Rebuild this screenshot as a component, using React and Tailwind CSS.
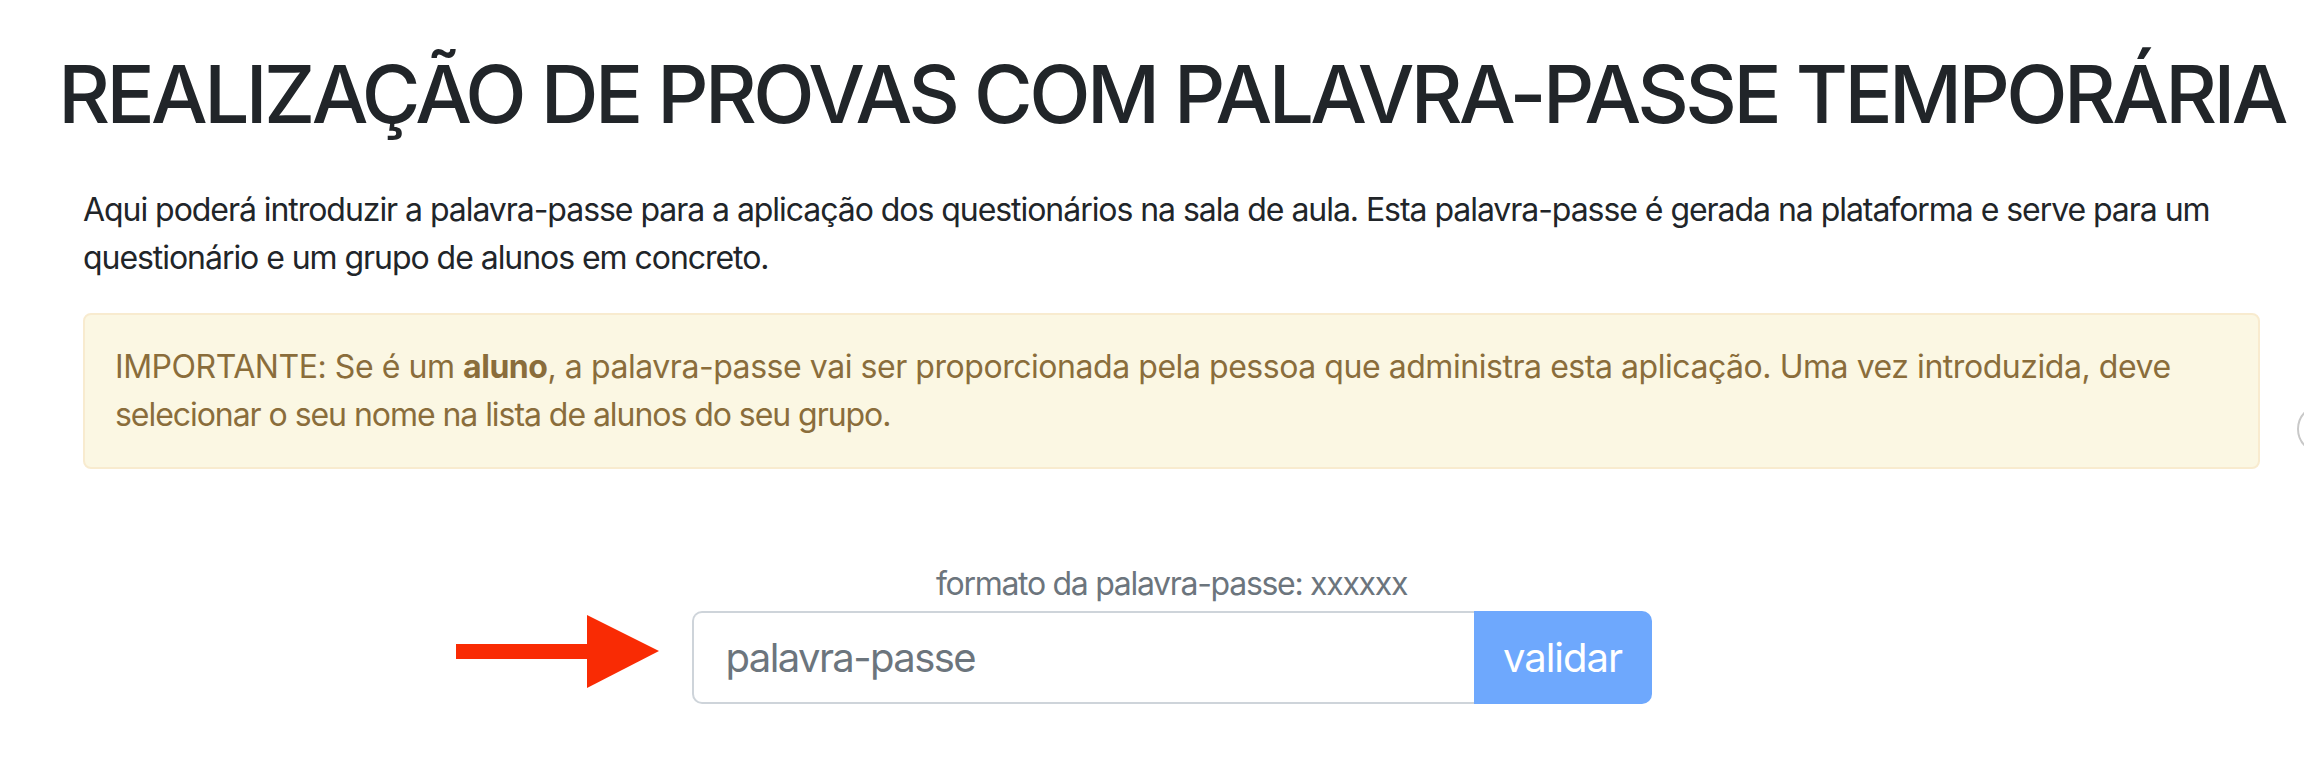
import { useState } from "react";

function Arrow() {
  return (
    <svg width="203" height="73" viewBox="0 0 203 73" className="absolute right-full top-[4px] mr-[33px]">
      <rect x="0" y="29" width="132" height="15" fill="#f92b04" />
      <polygon points="131,0 203,36 131,73" fill="#f92b04" />
    </svg>
  );
}

function App() {
  const [password, setPassword] = useState("");

  return (
    <div className="relative min-h-screen w-[2304px] overflow-hidden bg-white font-['Inter',sans-serif] text-[#212529]">
      <div className="ml-[83px] w-[2177px] pt-[46px]">
        <div className="flex justify-center">
          <h1 className="whitespace-nowrap text-[80px] font-medium leading-[96px] tracking-[-3.6px]">
            REALIZAÇÃO DE PROVAS COM PALAVRA-PASSE TEMPORÁRIA
          </h1>
        </div>

        <p className="mt-[44px] text-[32px] leading-[48px] tracking-[-1.05px]">
          Aqui poderá introduzir a palavra-passe para a aplicação dos questionários na sala de aula. Esta palavra-passe é gerada na plataforma e serve para um
          <br />
          questionário e um grupo de alunos em concreto.
        </p>

        <div className="mt-[31px] rounded-[8px] border-2 border-[#f8ebcf] bg-[#fbf7e3] px-[30px] py-[28px] text-[32px] leading-[48px] tracking-[-1.05px] text-[#8a6d3b]">
          <span className="block whitespace-nowrap tracking-[-0.45px]">
            IMPORTANTE: Se é um <b>aluno</b>, a palavra-passe vai ser proporcionada pela pessoa que administra esta aplicação. Uma vez introduzida, deve
          </span>
          <span className="block">selecionar o seu nome na lista de alunos do seu grupo.</span>
        </div>

        <form
          onSubmit={(e) => e.preventDefault()}
          className="mt-[91px] flex flex-col items-center"
        >
          <div className="text-[32px] leading-[48px] tracking-[-1.3px] text-[#6c757d]">
            formato da palavra-passe: xxxxxx
          </div>
          <div className="relative mt-[3px] flex h-[93px] w-[960px]">
            <Arrow />
            <input
              type="text"
              value={password}
              onChange={(e) => setPassword(e.target.value)}
              placeholder="palavra-passe"
              className="h-full min-w-0 flex-1 rounded-l-[10px] border-2 border-r-0 border-[#ced4da] bg-white px-[32px] text-[40px] tracking-[-1.6px] text-[#495057] outline-none placeholder:text-[#6c757d]"
            />
            <button
              type="submit"
              className="h-full w-[178px] rounded-r-[10px] bg-[#6ea8fd] text-[40px] tracking-[-1px] text-white"
            >
              validar
            </button>
          </div>
        </form>
      </div>

      <div className="absolute left-[2297px] top-[404px] h-[50px] w-[50px] rounded-full border-2 border-[#c8c8c8] bg-white" />
    </div>
  );
}

export default App;
